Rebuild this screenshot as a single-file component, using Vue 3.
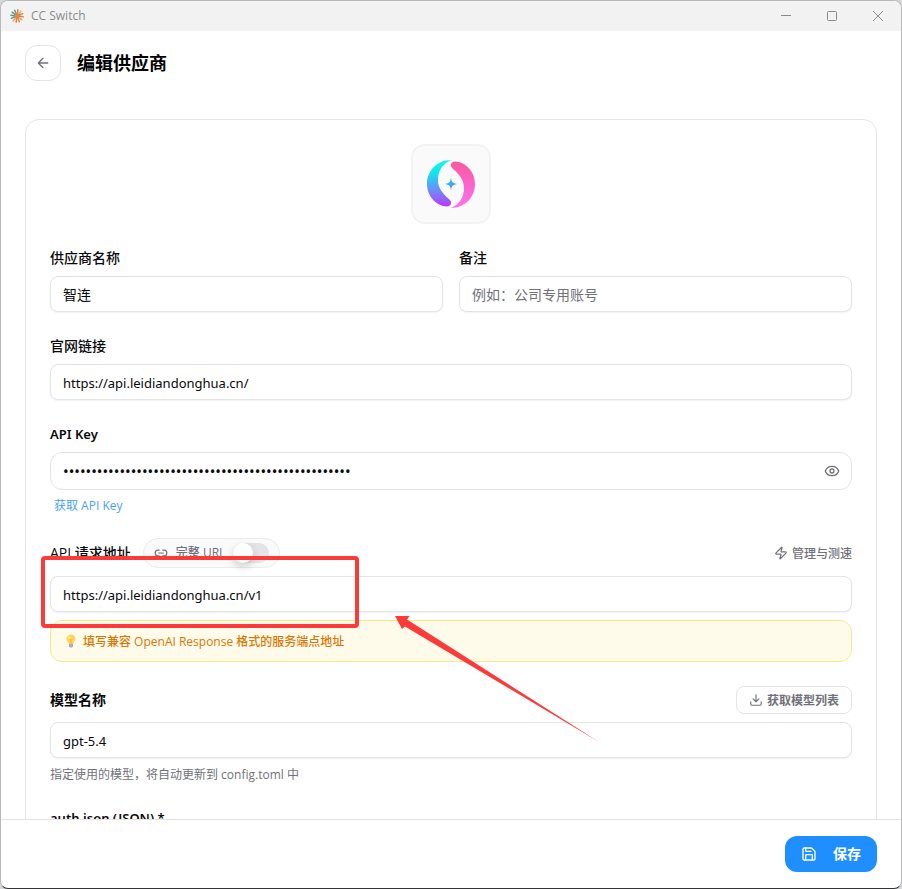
<script setup>
import { ref } from 'vue'

const name = ref('智连')
const notes = ref('')
const website = ref('https://api.leidiandonghua.cn/')
const apiKey = ref('k'.repeat(51))
const showKey = ref(false)
const endpoint = ref('https://api.leidiandonghua.cn/v1')
const fullUrl = ref(false)
const model = ref('gpt-5.4')
const auth = ref('')

const rays = Array.from({ length: 12 }, (_, i) => ({
  angle: i * 30 + 8,
  color: i > 7 ? '#5c9c9c' : i % 3 === 1 ? '#e9a94b' : '#e07f4c',
}))
</script>

<template>
  <div class="window">
    <div class="titlebar">
      <svg class="app-icon" viewBox="0 0 14 14" aria-hidden="true">
        <path
          v-for="ray in rays"
          :key="ray.angle"
          d="M7 6.4V.8"
          :stroke="ray.color"
          stroke-width="1.5"
          stroke-linecap="round"
          :transform="`rotate(${ray.angle} 7 7)`"
        />
        <circle cx="7" cy="7" r="2.4" fill="#e8834a" />
      </svg>
      <span class="app-name">CC Switch</span>
      <button class="win-btn" type="button" aria-label="最小化">
        <svg viewBox="0 0 12 12"><path d="M1 5.5h10" /></svg>
      </button>
      <button class="win-btn" type="button" aria-label="最大化">
        <svg viewBox="0 0 12 12"><rect x="1.5" y="1.5" width="9" height="9" rx="1" /></svg>
      </button>
      <button class="win-btn" type="button" aria-label="关闭">
        <svg viewBox="0 0 12 12"><path d="M1 1l10 10M11 1L1 11" /></svg>
      </button>
    </div>

    <header class="header">
      <button class="back" type="button" aria-label="返回">
        <svg class="icon" viewBox="0 0 24 24"><path d="m12 19-7-7 7-7M19 12H5" /></svg>
      </button>
      <h1>编辑供应商</h1>
    </header>

    <main class="content">
      <form class="card" @submit.prevent>
        <button class="logo" type="button" aria-label="选择图标">
          <svg viewBox="0 0 48 48">
            <defs>
              <linearGradient id="cool" x1="0" y1="0" x2="0" y2="1">
                <stop offset="0" stop-color="#08fbe8" />
                <stop offset="0.28" stop-color="#12e4ee" />
                <stop offset="0.65" stop-color="#6d8cf8" />
                <stop offset="1" stop-color="#bd38fb" />
              </linearGradient>
              <linearGradient id="warm" x1="0" y1="0" x2="0" y2="1">
                <stop offset="0" stop-color="#fb589f" />
                <stop offset="1" stop-color="#fb73f4" />
              </linearGradient>
              <linearGradient id="spark" x1="0" y1="0" x2="1" y2="1">
                <stop offset="0" stop-color="#18dcee" />
                <stop offset="1" stop-color="#6a74ee" />
              </linearGradient>
            </defs>
            <path fill="url(#cool)" d="M24 0C10 0 0 11 0 24c0 12 9 22 20 22.500c4 0 5.500-4 2.500-7C16 34 11 28 11 20.500C11 11 15 4 24 0z" />
            <path fill="url(#warm)" d="M24 48c14 0 24-11 24-24C48 12 39 2 28 1.500c-4 0-5.500 4-2.500 7C32 14 37 20 37 27.500C37 37 33 44 24 48z" />
            <path fill="url(#spark)" d="M24 17.500c.7 4.800 1.700 5.800 6.500 6.500c-4.800.7-5.800 1.700-6.500 6.500c-.7-4.800-1.700-5.800-6.500-6.500c4.800-.7 5.800-1.700 6.500-6.500z" />
          </svg>
        </button>

        <div class="two">
          <div class="field">
            <label for="name">供应商名称</label>
            <input id="name" v-model="name" class="input cjk" type="text" />
          </div>
          <div class="field">
            <label for="notes">备注</label>
            <input id="notes" v-model="notes" class="input cjk" type="text" placeholder="例如：公司专用账号" />
          </div>
        </div>

        <div class="field">
          <label for="website">官网链接</label>
          <input id="website" v-model="website" class="input" type="text" />
        </div>

        <div class="field">
          <label class="latin" for="key">API Key</label>
          <div class="key-box">
            <input id="key" v-model="apiKey" :type="showKey ? 'text' : 'password'" autocomplete="off" />
            <button type="button" class="plain" aria-label="显示 API Key" @click="showKey = !showKey">
              <svg class="icon" viewBox="0 0 24 24">
                <path d="M2.062 12.348a1 1 0 0 1 0-.696 10.750 10.750 0 0 1 19.876 0 1 1 0 0 1 0 .696 10.750 10.750 0 0 1-19.876 0" />
                <circle cx="12" cy="12" r="3" />
              </svg>
            </button>
          </div>
          <a class="get-key" href="#">获取 API Key</a>
        </div>

        <div class="field endpoint">
          <div class="row">
            <label for="endpoint">API 请求地址</label>
            <label class="pill">
              <svg class="icon small" viewBox="0 0 24 24">
                <path d="M9 17H7A5 5 0 0 1 7 7h2M15 7h2a5 5 0 1 1 0 10h-2M8 12h8" />
              </svg>
              <span>完整 URL</span>
              <input v-model="fullUrl" class="switch" type="checkbox" role="switch" />
            </label>
            <button type="button" class="plain manage">
              <svg class="icon small" viewBox="0 0 24 24">
                <path d="M4 14a1 1 0 0 1-.780-1.630l9.900-10.200a.5.5 0 0 1 .860.460l-1.920 6.020A1 1 0 0 0 13 10h7a1 1 0 0 1 .780 1.630l-9.900 10.200a.5.5 0 0 1-.860-.460l1.920-6.020A1 1 0 0 0 11 14z" />
              </svg>
              管理与测速
            </button>
          </div>
          <input id="endpoint" v-model="endpoint" class="input" type="text" />
          <p class="hint">
            <svg viewBox="0 0 12 14" aria-hidden="true">
              <path d="M6 .5a4.500 4.500 0 0 0-4.500 4.500c0 2.200 2.300 3 2.500 5h4c.2-2 2.500-2.800 2.500-5A4.500 4.500 0 0 0 6 .5z" fill="#fdd35c" />
              <path d="M4.500 5l1.500 1 1.500-1M6 6v4" fill="none" stroke="#f5ae35" stroke-width=".8" />
              <circle cx="4.200" cy="3.600" r="1.200" fill="#fff0a8" />
              <path d="M4 10h4v2.200L7 13.500H5L4 12.200z" fill="#b9a5c5" />
            </svg>
            填写兼容 OpenAI Response 格式的服务端点地址
          </p>

          <div class="marker-box" aria-hidden="true"></div>
          <svg class="marker-arrow" viewBox="0 0 206 128" aria-hidden="true">
            <path fill="#fc3a39" d="M1 1L15.500 1L13 4.500L205 127L11 11.500L8 14Z" />
          </svg>
        </div>

        <div class="field">
          <div class="row">
            <label class="strong" for="model">模型名称</label>
            <button type="button" class="fetch">
              <svg class="icon small" viewBox="0 0 24 24">
                <path d="M12 15V3M21 15v4a2 2 0 0 1-2 2H5a2 2 0 0 1-2-2v-4M7 10l5 5 5-5" />
              </svg>
              获取模型列表
            </button>
          </div>
          <input id="model" v-model="model" class="input" type="text" />
          <p class="help">指定使用的模型，将自动更新到 config.toml 中</p>
        </div>

        <div class="field">
          <label class="latin" for="auth">auth.json (JSON) *</label>
          <textarea id="auth" v-model="auth" class="input area"></textarea>
        </div>
      </form>
    </main>

    <footer class="footer">
      <button class="save" type="button">
        <svg class="icon" viewBox="0 0 24 24">
          <path d="M15.200 3a2 2 0 0 1 1.400.6l3.800 3.800a2 2 0 0 1 .6 1.400V19a2 2 0 0 1-2 2H5a2 2 0 0 1-2-2V5a2 2 0 0 1 2-2z" />
          <path d="M17 21v-7a1 1 0 0 0-1-1H8a1 1 0 0 0-1 1v7M7 3v4a1 1 0 0 0 1 1h7" />
        </svg>
        保存
      </button>
    </footer>
  </div>
</template>

<style>
body {
  margin: 0;
  background: #d4d6d8;
}
</style>

<style scoped>
* {
  box-sizing: border-box;
}

.window {
  display: flex;
  flex-direction: column;
  height: 100vh;
  overflow: hidden;
  border: 1px solid #b9b9b9;
  border-bottom-color: #333338;
  border-radius: 8px;
  background: #fff;
  color: #09090b;
  font-family: "Open Sans", "Noto Sans CJK SC", sans-serif;
  font-size: 12px;
}

button,
input,
textarea {
  margin: 0;
  font: inherit;
  color: inherit;
}

button {
  cursor: pointer;
}

.titlebar {
  display: flex;
  align-items: center;
  flex: none;
  height: 30px;
  padding-left: 9px;
  background: #f2f2f2;
  color: #8c8c8c;
}

.app-icon {
  width: 14px;
  height: 14px;
}

.app-name {
  flex: 1;
  padding-left: 7px;
  line-height: 16px;
}

.win-btn {
  display: flex;
  align-items: center;
  justify-content: center;
  width: 46px;
  height: 28px;
  padding: 0;
  border: 0;
  background: none;
}

.win-btn svg {
  width: 12px;
  height: 12px;
  fill: none;
  stroke: #8a8a8a;
}

.header {
  display: flex;
  align-items: center;
  flex: none;
  gap: 16px;
  padding: 14px 24px;
}

.back {
  display: flex;
  align-items: center;
  justify-content: center;
  width: 36px;
  height: 36px;
  padding: 0;
  border: 1px solid #e4e4e7;
  border-radius: 12px;
  background: #fff;
  color: #71717a;
}

h1 {
  margin: 0;
  color: #000;
  font-size: 18px;
  font-weight: 700;
  line-height: 28px;
}

.icon {
  flex: none;
  width: 16px;
  height: 16px;
  fill: none;
  stroke: currentColor;
  stroke-width: 2;
  stroke-linecap: round;
  stroke-linejoin: round;
}

.icon.small {
  width: 14px;
  height: 14px;
}

.content {
  flex: 1;
  min-height: 0;
  padding: 24px 24px 0;
  overflow: hidden auto;
  scrollbar-width: none;
}

.card {
  display: flex;
  flex-direction: column;
  gap: 24px;
  padding: 24px;
  border: 1px solid #e4e4e7;
  border-radius: 14px;
}

.logo {
  display: flex;
  align-items: center;
  justify-content: center;
  align-self: center;
  width: 80px;
  height: 80px;
  padding: 0;
  border: 2px solid #f3f3f4;
  border-radius: 14px;
  background: #fafafa;
}

.logo svg {
  width: 48px;
  height: 48px;
}

.two {
  display: grid;
  grid-template-columns: 1fr 1fr;
  gap: 16px;
}

.field {
  display: flex;
  flex-direction: column;
  gap: 8px;
}

.field label {
  font-size: 14px;
  font-weight: 500;
  line-height: 20px;
}

.field .latin {
  font-family: "Noto Sans", sans-serif;
  font-size: 13px;
  font-weight: 600;
}

.field .strong {
  font-weight: 600;
}

.input {
  width: 100%;
  height: 36px;
  padding: 6px 12px 4px;
  border: 1px solid #e4e4e7;
  border-radius: 8px;
  background: #fff;
  box-shadow: 0 1px 2px rgb(0 0 0 / 6%);
  font-family: "Noto Sans", "Noto Sans CJK SC", sans-serif;
  font-size: 13px;
  outline: 0;
}

.input.cjk {
  padding: 4px 12px;
  font-size: 14px;
}

.input::placeholder {
  color: #71717a;
}

.area {
  height: 120px;
  resize: none;
}

.key-box {
  display: flex;
  align-items: center;
  height: 38px;
  padding: 0 11px 0 12px;
  border: 1px solid #e4e4e7;
  border-radius: 12px;
}

.key-box input {
  flex: 1;
  min-width: 0;
  padding: 0;
  border: 0;
  outline: 0;
  background: none;
  font-family: "Noto Sans", sans-serif;
  font-size: 15px;
}

.plain {
  display: flex;
  align-items: center;
  gap: 4px;
  padding: 0;
  border: 0;
  background: none;
  color: #71717a;
}

.get-key {
  align-self: flex-start;
  padding-left: 4px;
  color: #4a9ffb;
  line-height: 16px;
  text-decoration: none;
}

.endpoint {
  position: relative;
}

.row {
  display: flex;
  align-items: center;
}

.field .pill {
  display: flex;
  align-items: center;
  gap: 8px;
  height: 30px;
  margin-left: 12px;
  padding: 0 10px;
  border: 1px solid #ebebed;
  border-radius: 15px;
  background: #fafafa;
  color: #71717a;
  font-size: 12px;
}

.switch {
  display: flex;
  align-items: center;
  width: 36px;
  height: 20px;
  border-radius: 10px;
  background: #e4e4e7;
  appearance: none;
}

.switch::before {
  width: 20px;
  height: 20px;
  border-radius: 50%;
  background: #fff;
  box-shadow: 0 4px 8px rgb(0 0 0 / 18%);
  content: "";
}

.switch:checked {
  justify-content: flex-end;
  background: #1f8fff;
}

.manage {
  margin-left: auto;
  font-weight: 500;
}

.hint {
  display: flex;
  align-items: center;
  gap: 6px;
  height: 42px;
  margin: 0;
  padding: 0 14px;
  border: 1px solid #fde68a;
  border-radius: 12px;
  background: #fffbeb;
  color: #d97706;
  font-weight: 500;
}

.hint svg {
  width: 12px;
  height: 14px;
}

.marker-box {
  position: absolute;
  top: 18px;
  left: -9px;
  width: 318px;
  height: 72px;
  border: 4px solid #fc3a39;
  border-radius: 4px;
  pointer-events: none;
}

.marker-arrow {
  position: absolute;
  top: 77px;
  left: 344px;
  width: 206px;
  height: 128px;
  pointer-events: none;
}

.fetch {
  display: flex;
  align-items: center;
  gap: 4px;
  height: 28px;
  margin-left: auto;
  padding: 0 12px;
  border: 1px solid #e4e4e7;
  border-radius: 8px;
  background: #fff;
  color: #71717a;
  font-weight: 600;
}

.help {
  margin: 0;
  color: #71717a;
  line-height: 18px;
}

.footer {
  display: flex;
  justify-content: flex-end;
  flex: none;
  padding: 16px 24px;
  border-top: 1px solid #e4e4e7;
}

.save {
  display: flex;
  align-items: center;
  gap: 16px;
  height: 36px;
  padding: 0 16px;
  border: 0;
  border-radius: 12px;
  background: #1f8fff;
  color: #fff;
  font-size: 14px;
  font-weight: 600;
  line-height: 20px;
}
</style>
